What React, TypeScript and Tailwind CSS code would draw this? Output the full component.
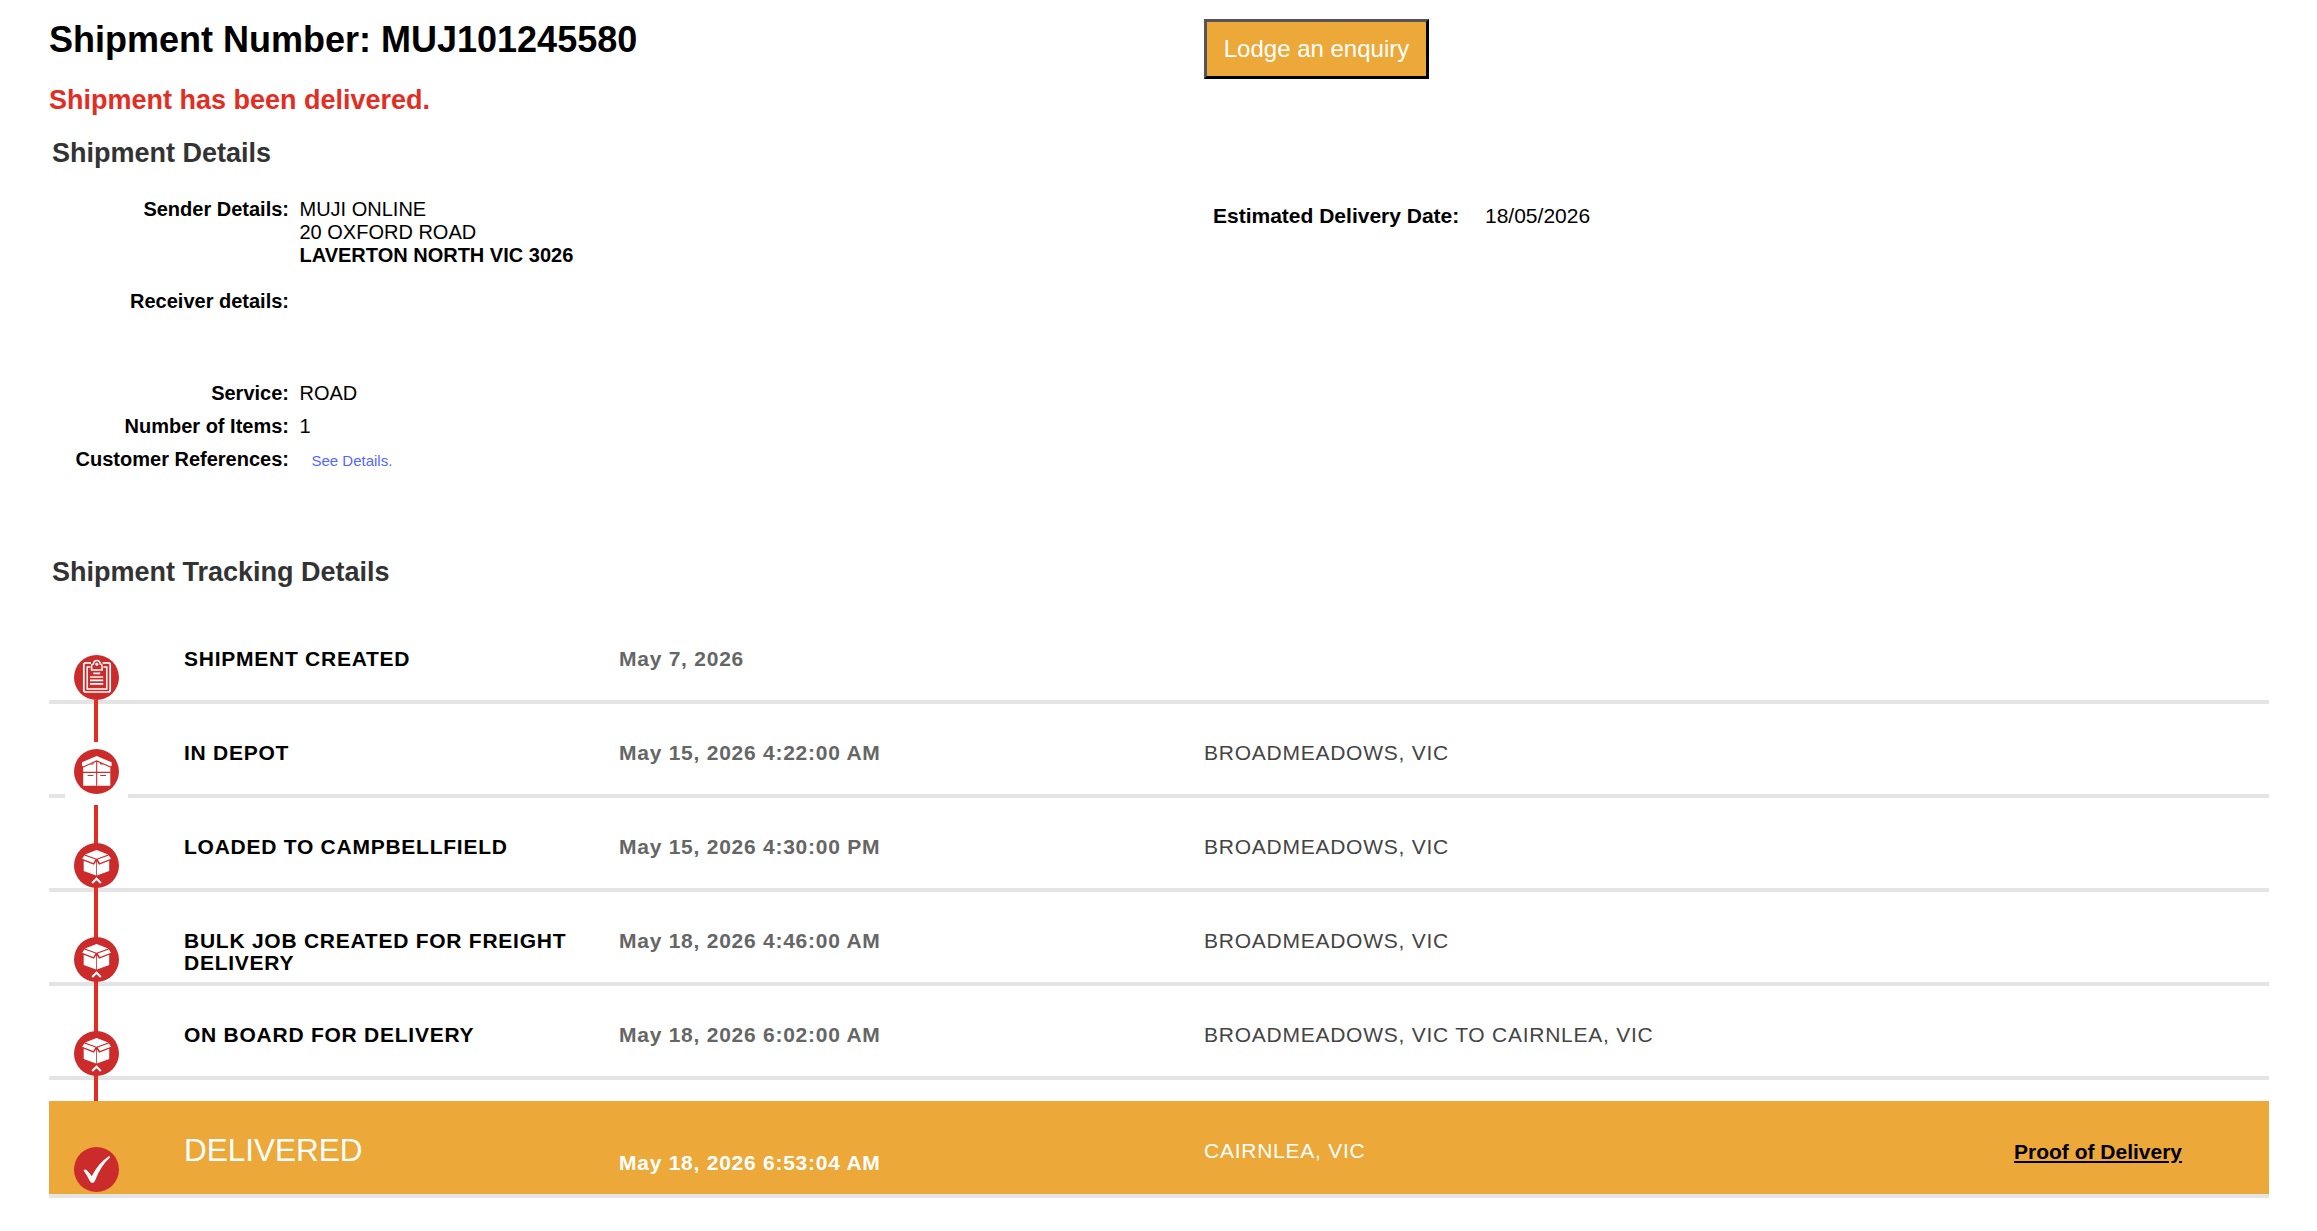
import React, { ReactNode } from "react";

type IconName = "clipboard" | "depot" | "box" | "check";

interface TrackingEvent {
  title: string;
  date: string;
  location: string;
  icon: IconName;
  connectorClass: string;
}

const events: TrackingEvent[] = [
  {
    title: "SHIPMENT CREATED",
    date: "May 7, 2026",
    location: "",
    icon: "clipboard",
    connectorClass: "h-[42px] top-[90px]",
  },
  {
    title: "IN DEPOT",
    date: "May 15, 2026 4:22:00 AM",
    location: "BROADMEADOWS, VIC",
    icon: "depot",
    connectorClass: "h-[42px] top-[101px]",
  },
  {
    title: "LOADED TO CAMPBELLFIELD",
    date: "May 15, 2026 4:30:00 PM",
    location: "BROADMEADOWS, VIC",
    icon: "box",
    connectorClass: "h-[52px] top-[89px]",
  },
  {
    title: "BULK JOB CREATED FOR FREIGHT DELIVERY",
    date: "May 18, 2026 4:46:00 AM",
    location: "BROADMEADOWS, VIC",
    icon: "box",
    connectorClass: "h-[52px] top-[89px]",
  },
  {
    title: "ON BOARD FOR DELIVERY",
    date: "May 18, 2026 6:02:00 AM",
    location: "BROADMEADOWS, VIC TO CAIRNLEA, VIC",
    icon: "box",
    connectorClass: "h-[26px] top-[89px]",
  },
];

const labelClass = "w-[240px] text-right font-bold";
const rowTextClass = "text-[21px] leading-[22px]";

const StatusIcon = ({ name }: { name: IconName }) => (
  <svg viewBox="0 0 45 45" className="relative block h-[45px] w-[45px]">
    <circle cx="22.5" cy="22.5" r="22.5" fill="#cb2b2a" />
    {name === "clipboard" && (
      <g fill="none" stroke="#fff">
        <path
          d="M17 7.800h-5.200q-2 0-2 2v25.200q0 2 2 2h22.400q2 0 2-2V9.800q0-2-2-2h-5.600"
          strokeWidth="1.700"
        />
        <path d="M16.500 12h-3.300v21.900h19.600V12h-3.300" strokeWidth="1.500" />
        <path
          d="M17.600 14.900v-4q0-1.600 1.800-1.800a3.500 4.200 0 0 1 6.900 0q1.800.2 1.800 1.800v4z"
          strokeWidth="1.500"
        />
        <circle cx="22.800" cy="9.200" r="1.300" fill="#fff" strokeWidth="0.500" />
        <path
          d="M19.300 18.400h6.900M16 22h13.200M16 25.400h13.200M16 28.900h13.200"
          strokeWidth="1.700"
        />
      </g>
    )}
    {name === "depot" && (
      <g>
        <path
          d="M22.700 7L37.600 13.200v3.900h-1.300v19.600H9.200V17.100H8v-3.900z"
          fill="#fff"
        />
        <path
          d="M9.200 18L22.700 11.900 36.400 18M22.700 12v24.700M9 23.400h27.500M13.600 26.500h5.800M26.200 26.500h5.800"
          fill="none"
          stroke="#cb2b2a"
          strokeWidth="1.100"
        />
        <path
          d="M16 15.400l3.500-1.600v1.600zM29.500 15.400L26 13.800v1.600z"
          fill="#cb2b2a"
        />
      </g>
    )}
    {name === "box" && (
      <g>
        <path d="M22.600 7L34.200 11.400 22.600 15.700 11 11.400z" fill="#fff" />
        <path
          d="M10.300 12.400l11.200 4.200-2.200 3.500L8.200 15.800zM34.900 12.400l-11.200 4.200 2.200 3.500L37 15.800z"
          fill="#fff"
        />
        <path
          d="M9.700 17.800l10.200 3.900 2.200-3.200v14L9.700 28.100zM35.200 17.800L25.100 21.700l-2.200-3.200v14l12.300-4.400z"
          fill="#fff"
        />
        <path
          d="M18.200 40l4.300-4.200 4.300 4.200"
          fill="none"
          stroke="#fff"
          strokeWidth="2.100"
        />
      </g>
    )}
    {name === "check" && (
      <path
        d="M9.500 23.200q1.800-1.400 3.300 0 2.800 2.800 5 6Q24 16.500 34.800 9.300q1.200-.2 1.200 1.300Q27 18.500 21.300 33q-1 3-2.800 3-1.700 0-2.700-2-2.400-5-6.300-10.800z"
        fill="#fff"
      />
    )}
  </svg>
);

const DetailRow = ({
  label,
  children,
}: {
  label: string;
  children?: ReactNode;
}) => (
  <div className="flex gap-[10.5px]">
    <div className={labelClass}>{label}</div>
    <div>{children}</div>
  </div>
);

const App = () => {
  return (
    <div className="min-h-[1231px] bg-white pl-[49px] pr-12 pt-[19px] font-['Liberation_Sans',Arial,sans-serif] text-black">
      <div className="flex h-[66px] items-start">
        <h1 className="w-[1155px] pt-px text-[36px] leading-10 font-bold">
          Shipment Number: MUJ101245580
        </h1>
        <button className="h-[60px] w-[225px] border-3 border-t-[#555] border-l-[#555] border-r-black border-b-black bg-[#eca839] pb-px text-2xl text-white">
          Lodge an enquiry
        </button>
      </div>
      <h2 className="text-[27px] leading-[30px] font-bold text-[#e42d22]">
        Shipment has been delivered.
      </h2>
      <h2 className="mt-[23px] pl-[3px] text-[27px] leading-[30px] font-bold text-[#333]">
        Shipment Details
      </h2>

      <div className="mt-[29.5px] flex h-[359.5px] items-start">
        <div className="flex w-[1164px] flex-col text-[20px] leading-[23px]">
          <DetailRow label="Sender Details:">
            <div>MUJI ONLINE</div>
            <div>20 OXFORD ROAD</div>
            <div className="font-bold">LAVERTON NORTH VIC 3026</div>
          </DetailRow>
          <div className="mt-[23px] h-[92px]">
            <DetailRow label="Receiver details:" />
          </div>
          <div className="flex flex-col gap-2.5">
            <DetailRow label="Service:">ROAD</DetailRow>
            <DetailRow label="Number of Items:">1</DetailRow>
            <DetailRow label="Customer References:">
              <a className="pl-3 text-[15px] text-[#5468ff]">See Details.</a>
            </DetailRow>
          </div>
        </div>
        <div className="mt-1.5 flex text-[21px] leading-6">
          <div className="w-[272px] font-bold">Estimated Delivery Date:</div>
          <div>18/05/2026</div>
        </div>
      </div>

      <h2 className="pl-[3px] text-[27px] leading-[30px] font-bold text-[#333]">
        Shipment Tracking Details
      </h2>

      <div className="mt-[23px]">
        {events.map((event) => (
          <div
            key={event.title}
            className="flex h-[94px] border-b-4 border-[#e4e4e4] tracking-[0.75px]"
          >
            <div className="relative w-[135px] pt-[45px] pl-[25px]">
              {event.icon === "depot" && (
                <div className="absolute top-[38px] left-4 h-[63px] w-[63px] bg-white" />
              )}
              <div
                className={`absolute left-[45px] w-1 bg-[#e42d22] ${event.connectorClass}`}
              />
              <StatusIcon name={event.icon} />
            </div>
            <div
              className={`w-[435px] pt-[37.5px] pr-8 font-bold ${rowTextClass}`}
            >
              {event.title}
            </div>
            <div
              className={`w-[585px] pt-[37.5px] font-bold text-[#666] ${rowTextClass}`}
            >
              {event.date}
            </div>
            <div className={`pt-[37.5px] text-[#444] ${rowTextClass}`}>
              {event.location}
            </div>
          </div>
        ))}

        <div className="relative mt-[21px] flex h-[97px] border-b-4 border-[#e4e4e4] bg-[#eca839] tracking-[0.75px] text-white">
          <div className="w-[135px] pt-[46px] pl-[25px]">
            <StatusIcon name="check" />
          </div>
          <div className="w-[435px] pt-[33px] text-[31.5px] leading-[32px] tracking-normal">
            DELIVERED
          </div>
          <div className={`w-[585px] pt-[50.5px] font-bold ${rowTextClass}`}>
            May 18, 2026 6:53:04 AM
          </div>
          <div className={`w-[810px] pt-[38.5px] ${rowTextClass}`}>
            CAIRNLEA, VIC
          </div>
          <a
            className={`pt-[39.5px] font-bold tracking-normal text-black underline ${rowTextClass}`}
          >
            Proof of Delivery
          </a>
        </div>
      </div>
    </div>
  );
};

export default App;
